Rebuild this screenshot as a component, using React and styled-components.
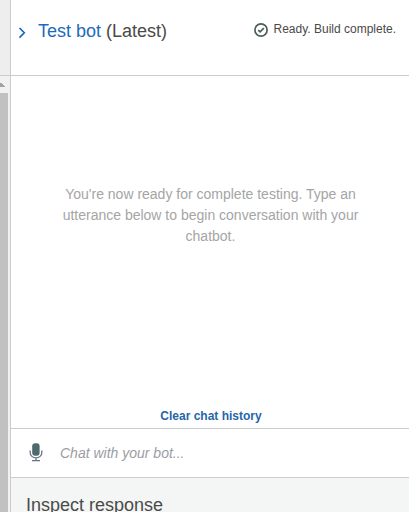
import React from "react";
import styled, { createGlobalStyle } from "styled-components";

const GlobalStyle = createGlobalStyle`
  *, *::before, *::after { box-sizing: border-box; }
  html, body { margin: 0; overflow: hidden; }
  body { background: #fff; font-family: "Liberation Sans", Arial, sans-serif; color: #4a4a48; }
`;

const Shell = styled.div`
  display: flex;
  width: 100%;
  height: 100vh;
  overflow: hidden;
`;

const Gutter = styled.aside`
  display: flex;
  flex-direction: column;
  flex: none;
  width: 10px;
  background: #eee;
`;

const GutterTop = styled.div`
  flex: none;
  height: 76px;
  border-bottom: 1px solid #ccc;
`;

const ScrollTrack = styled.div`
  display: flex;
  flex-direction: column;
  flex: 1;
  background: #f1f1f1;
`;

const ScrollArrow = styled.svg`
  display: block;
  flex: none;
  width: 8px;
  height: 17px;
`;

const ScrollThumb = styled.div`
  flex: 1;
  width: 8px;
  background: #c1c1c1;
`;

const Panel = styled.main`
  display: flex;
  flex-direction: column;
  flex: 1;
  min-width: 0;
  border-left: 1px solid #ccc;
`;

const Header = styled.header`
  display: flex;
  flex: none;
  justify-content: space-between;
  height: 76px;
  padding: 20px 13px 0 7px;
  border-bottom: 1px solid #ccc;
`;

const TitleGroup = styled.div`
  display: flex;
  align-items: flex-start;
`;

const Chevron = styled.svg`
  flex: none;
  width: 9px;
  height: 12px;
  margin: 7px 11px 0 0;
`;

const Title = styled.h1`
  margin: 0;
  font-size: 18px;
  font-weight: 400;
  line-height: 22px;
  color: #4a4a48;
  white-space: nowrap;
`;

const BotName = styled.span`
  color: #1f6abb;
`;

const Status = styled.div`
  display: flex;
  align-items: flex-start;
  font-size: 12px;
  line-height: 18px;
  white-space: nowrap;
`;

const StatusIcon = styled.svg`
  flex: none;
  width: 14px;
  height: 14px;
  margin: 3px 5px 0 0;
`;

const Conversation = styled.section`
  display: flex;
  flex-direction: column;
  align-items: center;
  justify-content: space-between;
  flex: none;
  height: 353px;
  padding: 108px 0 3px 1px;
  border-bottom: 1px solid #ccc;
`;

const Hint = styled.p`
  width: 300px;
  margin: 0;
  font-size: 14px;
  line-height: 21px;
  text-align: center;
  color: #a5a5a5;
`;

const ClearButton = styled.button`
  padding: 0 0 0 1px;
  border: 0;
  background: none;
  font: 700 12px/18px "Liberation Sans", Arial, sans-serif;
  color: #2566a9;
`;

const Composer = styled.div`
  display: flex;
  align-items: center;
  flex: none;
  height: 49px;
  padding-left: 18px;
  border-bottom: 1px solid #ccc;
`;

const MicIcon = styled.svg`
  flex: none;
  width: 14px;
  height: 19px;
  margin: -1px 17px 0 0;
`;

const ChatInput = styled.input`
  flex: 1;
  min-width: 0;
  height: 24px;
  padding: 0;
  border: 0;
  outline: 0;
  background: none;
  font: italic 14px/24px "Liberation Sans", Arial, sans-serif;

  &::placeholder {
    color: #9b9da5;
    opacity: 1;
  }
`;

const Inspector = styled.section`
  flex: 1;
  padding: 16px 15px 0;
  background: #f4f6f6;
`;

const InspectorTitle = styled.h2`
  margin: 0;
  font-size: 18px;
  font-weight: 400;
  line-height: 22px;
  color: #4a4a48;
`;

export default function App() {
  return (
    <>
      <GlobalStyle />
      <Shell>
        <Gutter>
          <GutterTop />
          <ScrollTrack>
            <ScrollArrow viewBox="0 0 8 17" shapeRendering="crispEdges">
              <path d="M0 7h2v1h1v1h1v1h1v1H0z" fill="#a5a0aa" />
            </ScrollArrow>
            <ScrollThumb />
          </ScrollTrack>
        </Gutter>
        <Panel>
          <Header>
            <TitleGroup>
              <Chevron viewBox="0 0 9 12" fill="none">
                <path d="M1.5 1 6.3 5.8 1.5 10.6" stroke="#1166bb" strokeWidth="1.6" />
              </Chevron>
              <Title><BotName>Test bot</BotName> (Latest)</Title>
            </TitleGroup>
            <Status>
              <StatusIcon viewBox="0 0 14 14" fill="none" stroke="#4a5f56">
                <circle cx="7" cy="7" r="6.1" strokeWidth="1.7" />
                <path d="m4.2 7.1 1.9 1.8 3.7-3.7" strokeWidth="1.7" />
              </StatusIcon>
              Ready. Build complete.
            </Status>
          </Header>
          <Conversation>
            <Hint>
              You're now ready for complete testing. Type an utterance below to begin conversation with your chatbot.
            </Hint>
            <ClearButton type="button">Clear chat history</ClearButton>
          </Conversation>
          <Composer>
            <MicIcon viewBox="0 0 14 19" fill="none">
              <rect x="3.2" y="0.3" width="7.4" height="12.4" rx="3" fill="#4d6a6d" />
              <path d="M1.2 7.5v2.2a5.8 5.2 0 0 0 11.6 0V7.5M7 15v3M3 17.7h8" stroke="#66728a" strokeWidth="1.3" />
            </MicIcon>
            <ChatInput placeholder="Chat with your bot..." />
          </Composer>
          <Inspector>
            <InspectorTitle>Inspect response</InspectorTitle>
          </Inspector>
        </Panel>
      </Shell>
    </>
  );
}
